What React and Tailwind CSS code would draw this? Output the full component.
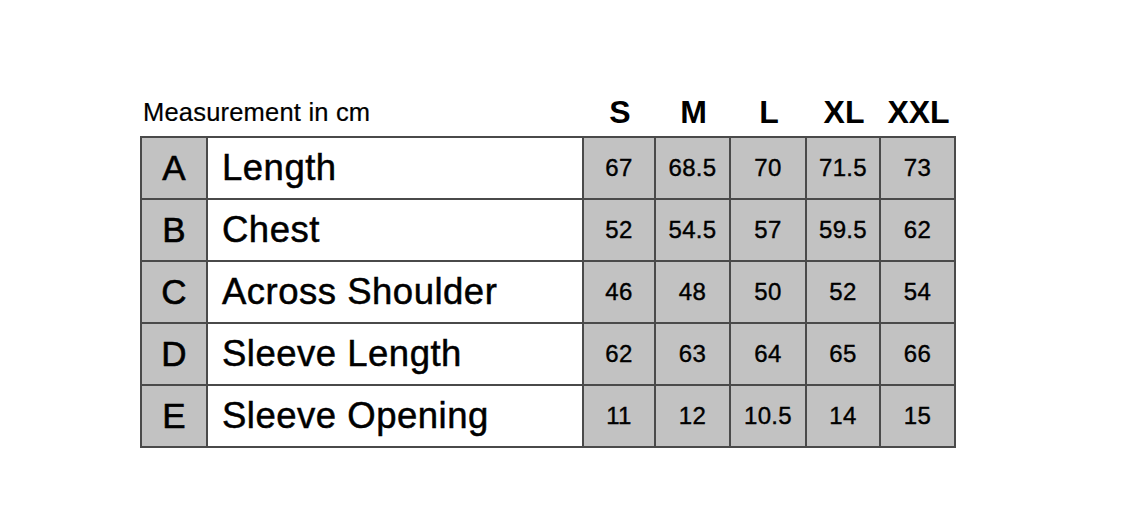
const SIZES = ['S', 'M', 'L', 'XL', 'XXL']

const ROWS = [
  { key: 'A', name: 'Length',          values: ['67', '68.5', '70', '71.5', '73'] },
  { key: 'B', name: 'Chest',           values: ['52', '54.5', '57', '59.5', '62'] },
  { key: 'C', name: 'Across Shoulder', values: ['46', '48', '50', '52', '54'] },
  { key: 'D', name: 'Sleeve Length',   values: ['62', '63', '64', '65', '66'] },
  { key: 'E', name: 'Sleeve Opening',  values: ['11', '12', '10.5', '14', '15'] },
]

const COLS = 'grid grid-cols-[66px_376px_72px_75px_76px_74px_75px]'

export default function App() {
  return (
    <div className="w-full h-[531px] bg-white text-black font-['Liberation_Sans',Arial,sans-serif] pt-[94px] pl-[140px]">
      <div className={`${COLS} h-[42px] items-end pb-[8px] pl-[2px]`}>
        <div className="col-span-2 pl-[1px] text-[25.5px] leading-none tracking-[0.2px] mb-[3px] [-webkit-text-stroke:0.2px_black]">Measurement in cm</div>
        {SIZES.map(s => (
          <div key={s} className="text-center text-[32px] leading-none font-bold">{s}</div>
        ))}
      </div>

      <div className="w-[816px] border-t-2 border-l-2 border-[#4a4a4a]">
        {ROWS.map(r => (
          <div key={r.key} className={`${COLS} h-[62px]`}>
            <div className="bg-[#c2c2c2] border-r-2 border-b-2 border-[#4a4a4a] flex items-center justify-center text-[35px] [-webkit-text-stroke:0.6px_black]">
              {r.key}
            </div>
            <div className="bg-white border-r-2 border-b-2 border-[#4a4a4a] flex items-center pl-[14px] text-[36.5px] tracking-[0.5px] [-webkit-text-stroke:0.5px_black]">
              {r.name}
            </div>
            {r.values.map((v, i) => (
              <div key={i} className="bg-[#c2c2c2] border-r-2 border-b-2 border-[#4a4a4a] flex items-center justify-center text-[24px] tracking-[0.3px] [-webkit-text-stroke:0.4px_black]">
                {v}
              </div>
            ))}
          </div>
        ))}
      </div>
    </div>
  )
}
